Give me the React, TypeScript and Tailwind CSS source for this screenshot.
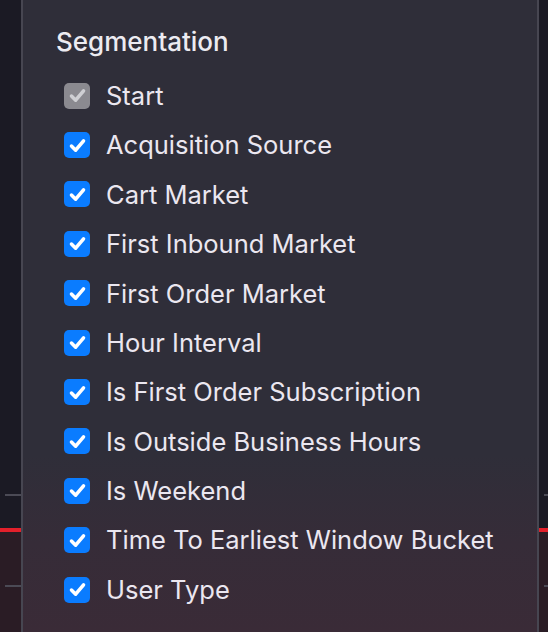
import { useState } from "react";

const options = [
  "Acquisition Source",
  "Cart Market",
  "First Inbound Market",
  "First Order Market",
  "Hour Interval",
  "Is First Order Subscription",
  "Is Outside Business Hours",
  "Is Weekend",
  "Time To Earliest Window Bucket",
  "User Type",
];

function CheckMark({ className }: { className: string }) {
  return (
    <svg viewBox="0 0 16 16" className={className} fill="none">
      <path d="M3.4 8.4 6.6 11.6 12.6 4.4" stroke="currentColor" strokeWidth="2.7" strokeLinecap="round" strokeLinejoin="round" />
    </svg>
  );
}

// the chart lying behind the popover
function ChartBackdrop() {
  return (
    <svg className="absolute inset-0 h-full w-full" viewBox="0 0 548 632" preserveAspectRatio="none">
      <rect x="0" y="530" width="548" height="102" fill="#2a1c25" />
      <rect x="0" y="528" width="548" height="4" fill="#e3202b" />
      <rect x="5" y="494" width="17" height="2" fill="#4b4a55" />
      <rect x="5" y="585" width="17" height="2" fill="#4b4a55" />
      <rect x="544" y="494" width="4" height="2" fill="#4b4a55" />
      <rect x="544" y="585" width="4" height="2" fill="#4b4a55" />
    </svg>
  );
}

function Row({ label, checked, disabled, onToggle }: { label: string; checked: boolean; disabled?: boolean; onToggle?: () => void }) {
  return (
    <label className="flex h-[49.4px] cursor-pointer items-center gap-4 pl-2">
      <span
        onClick={onToggle}
        className={
          disabled
            ? "flex h-[26px] w-[26px] items-center justify-center rounded-[5px] bg-[#8b8a90] text-[#cfcfd3]"
            : checked
              ? "flex h-[26px] w-[26px] items-center justify-center rounded-[5px] bg-[#0a7cff] text-white"
              : "flex h-[26px] w-[26px] items-center justify-center rounded-[5px] border border-[#6b6a73] bg-[#3a3944]"
        }
      >
        {(checked || disabled) && <CheckMark className="h-[21px] w-[21px]" />}
      </span>
      <span className="text-[25.5px] leading-none text-[#ebe7f0]">{label}</span>
    </label>
  );
}

export default function App() {
  const [checked, setChecked] = useState<Record<string, boolean>>(
    Object.fromEntries(options.map((o) => [o, true]))
  );

  return (
    <div className="relative flex h-[632px] w-[548px] overflow-hidden bg-[#1b1a24]" style={{ fontFamily: "Inter, 'Noto Sans', sans-serif" }}>
      <ChartBackdrop />

      <div className="relative ml-[21px] w-[518px] border-x-2 border-[#474651] bg-[linear-gradient(to_bottom,#2f2e39_0%,#2f2e39_72%,#362c38_86%,#3a2b37_100%)] pl-[33px] pt-[27px]">
        <h2 className="text-[26px] font-medium leading-[30px] text-[#ecebf1]">Segmentation</h2>
        <div className="mt-[14px] flex flex-col">
          <Row label="Start" checked disabled />
          {options.map((o) => (
            <Row
              key={o}
              label={o}
              checked={checked[o]}
              onToggle={() => setChecked((c) => ({ ...c, [o]: !c[o] }))}
            />
          ))}
        </div>
      </div>
    </div>
  );
}
